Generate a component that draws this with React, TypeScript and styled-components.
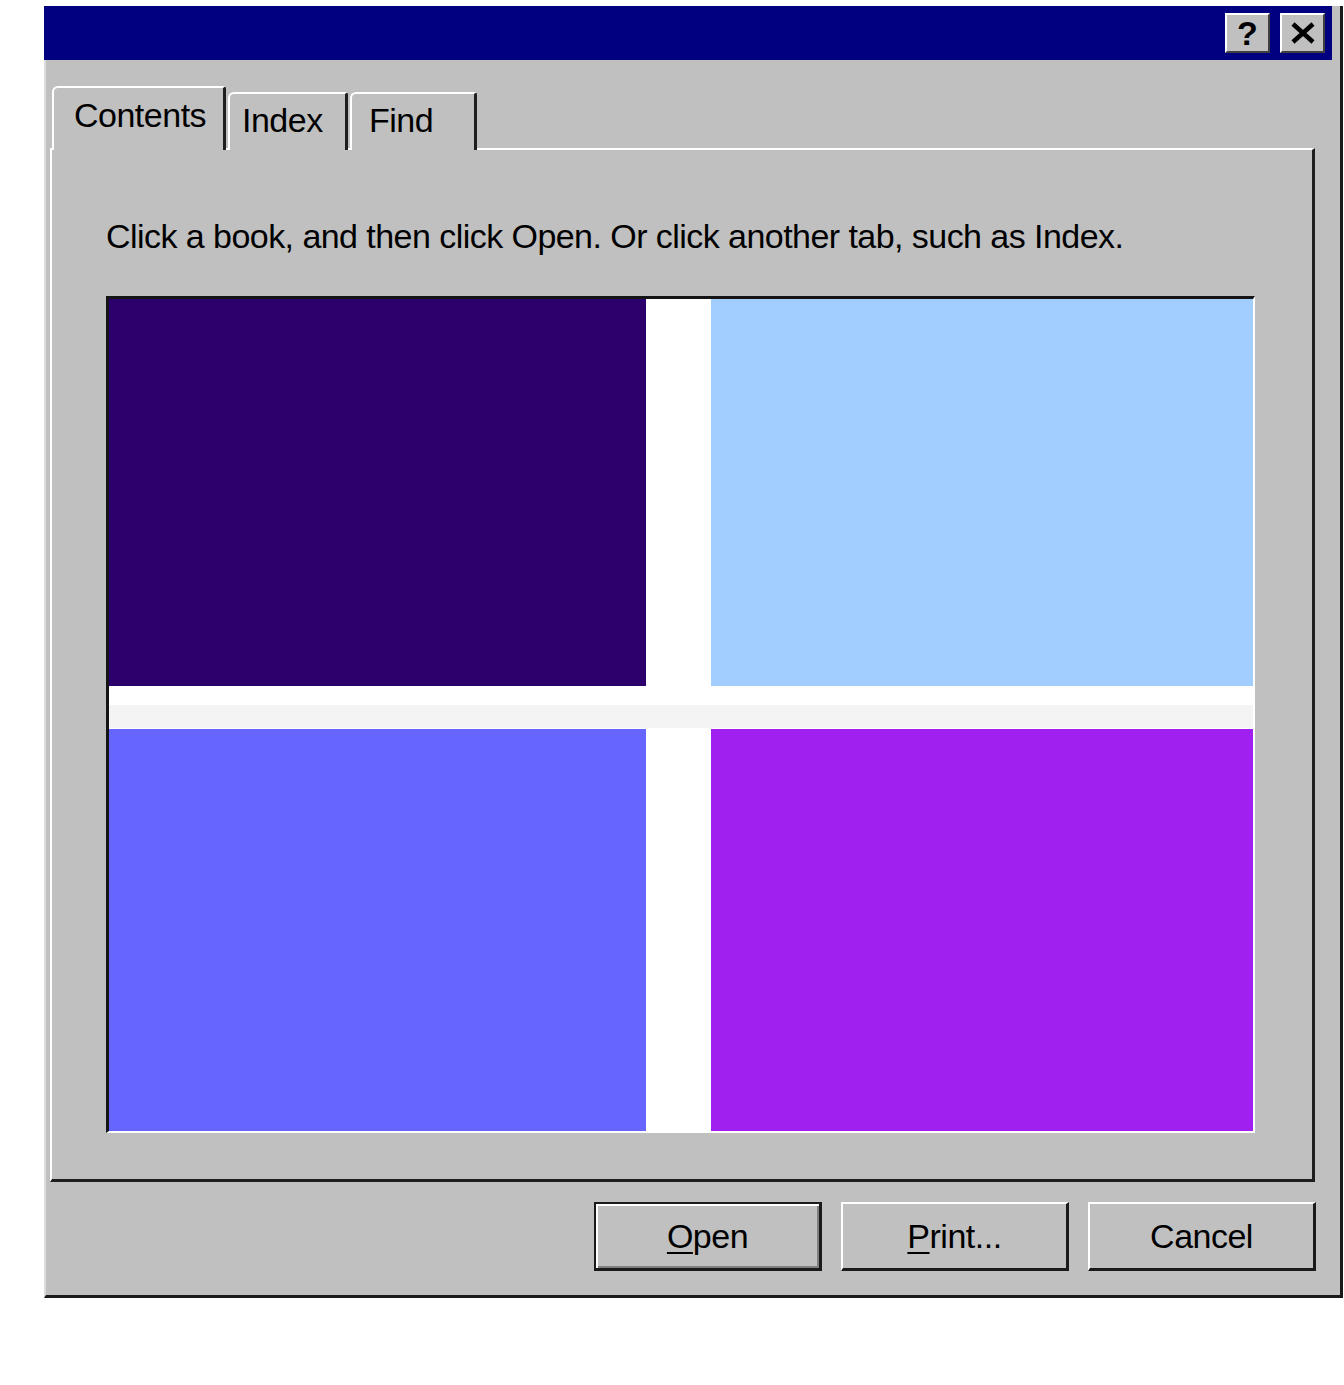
import React from "react";
import styled, { createGlobalStyle } from "styled-components";

const Global = createGlobalStyle`
  html, body { margin: 0; padding: 0; background: #ffffff; }
  body { font-family: "Liberation Sans", Arial, sans-serif; }
`;

const Window = styled.div`
  box-sizing: border-box;
  margin: 6px 0 0 44px;
  width: 1299px;
  height: 1292px;
  background: #c0c0c0;
  border-left: 2px solid #dcdcdc;
  border-right: 3px solid #1a1a1a;
  border-bottom: 3px solid #1a1a1a;
  display: flex;
  flex-direction: column;
`;

const TitleBar = styled.div`
  height: 54px;
  margin-left: -2px;
  margin-right: 8px;
  background: #000080;
  display: flex;
  align-items: center;
  justify-content: flex-end;
  gap: 10px;
  padding-right: 7px;
`;

const CaptionButton = styled.div`
  box-sizing: border-box;
  width: 45px;
  height: 40px;
  background: #c0c0c0;
  border-top: 2px solid #ffffff;
  border-left: 2px solid #ffffff;
  border-right: 2px solid #404040;
  border-bottom: 2px solid #404040;
  display: flex;
  align-items: center;
  justify-content: center;
  font-weight: bold;
  font-size: 34px;
  color: #000;
  line-height: 1;
`;

const Body = styled.div`
  flex: 1;
  display: flex;
  flex-direction: column;
  padding: 26px 25px 24px 4px;
`;

const TabRow = styled.div`
  display: flex;
  align-items: flex-end;
  height: 64px;
  margin-bottom: -2px;
  position: relative;
  z-index: 1;
`;

const Tab = styled.div<{ $active?: boolean; $w: number; $pad: number }>`
  box-sizing: border-box;
  width: ${(p) => p.$w}px;
  height: ${(p) => (p.$active ? 64 : 58)}px;
  margin-left: 2px;
  background: #c0c0c0;
  border-top: 2px solid #ffffff;
  border-left: 2px solid #ffffff;
  border-right: 3px solid #1e1e1e;
  border-top-left-radius: 6px;
  border-top-right-radius: 3px;
  display: flex;
  align-items: flex-start;
  justify-content: flex-start;
  padding-left: ${(p) => p.$pad}px;
  padding-top: ${(p) => (p.$active ? 7 : 6)}px;
  font-size: 34px;
  letter-spacing: -0.5px;
  color: #000;
  line-height: 40px;
`;

const Panel = styled.div`
  box-sizing: border-box;
  height: 1034px;
  background: #c0c0c0;
  border-top: 2px solid #ffffff;
  border-left: 2px solid #ffffff;
  border-right: 3px solid #1e1e1e;
  border-bottom: 3px solid #1e1e1e;
  padding: 66px 0 0 54px;
  display: flex;
  flex-direction: column;
`;

const Instruction = styled.div`
  font-size: 34px;
  letter-spacing: -0.55px;
  line-height: 40px;
  color: #000;
  margin-bottom: 40px;
`;

const Picture = styled.div`
  box-sizing: border-box;
  width: 1149px;
  height: 837px;
  border-top: 3px solid #141414;
  border-left: 3px solid #141414;
  border-right: 2px solid #ffffff;
  border-bottom: 2px solid #ffffff;
  display: grid;
  grid-template-columns: 537px 1fr;
  grid-template-rows: 387px 1fr;
  column-gap: 65px;
  row-gap: 43px;
  background: linear-gradient(
    to bottom,
    #ffffff 0 406px,
    #f4f4f4 406px 429px,
    #ffffff 429px
  );
`;

const Swatch = styled.div<{ $c: string }>`
  background: ${(p) => p.$c};
`;

const ButtonRow = styled.div`
  display: flex;
  justify-content: flex-end;
  gap: 19px;
  margin-top: 20px;
  margin-right: -1px;
`;

const PushButton = styled.div<{ $default?: boolean }>`
  box-sizing: border-box;
  width: 228px;
  height: 69px;
  background: #c0c0c0;
  border-top: 2px solid ${(p) => (p.$default ? "#1a1a1a" : "#ffffff")};
  border-left: 2px solid ${(p) => (p.$default ? "#1a1a1a" : "#ffffff")};
  border-right: 3px solid #1a1a1a;
  border-bottom: 3px solid #1a1a1a;
  box-shadow: ${(p) =>
    p.$default ? "inset 2px 2px 0 #ffffff, inset -2px -2px 0 #808080" : "none"};
  display: flex;
  align-items: center;
  justify-content: center;
  font-size: 34px;
  letter-spacing: -0.5px;
  color: #000;
`;

const Hot = styled.span`
  text-decoration: underline;
  text-underline-offset: 4px;
  text-decoration-thickness: 2px;
`;

export default function App() {
  return (
    <>
      <Global />
      <Window>
        <TitleBar>
          <CaptionButton>?</CaptionButton>
          <CaptionButton>
            <svg width="28" height="24" viewBox="0 0 28 24">
              <path d="M4 3 L24 21 M24 3 L4 21" stroke="#000" strokeWidth="4.5" />
            </svg>
          </CaptionButton>
        </TitleBar>
        <Body>
          <TabRow>
            <Tab $active $w={174} $pad={20}>Contents</Tab>
            <Tab $w={120} $pad={12}>Index</Tab>
            <Tab $w={127} $pad={17}>Find</Tab>
          </TabRow>
          <Panel>
            <Instruction>
              Click a book, and then click Open. Or click another tab, such as Index.
            </Instruction>
            <Picture>
              <Swatch $c="#2c006c" />
              <Swatch $c="#a2cdff" />
              <Swatch $c="#6666ff" />
              <Swatch $c="#a020f0" />
            </Picture>
          </Panel>
          <ButtonRow>
            <PushButton $default>
              <span>
                <Hot>O</Hot>pen
              </span>
            </PushButton>
            <PushButton>
              <span>
                <Hot>P</Hot>rint...
              </span>
            </PushButton>
            <PushButton>Cancel</PushButton>
          </ButtonRow>
        </Body>
      </Window>
    </>
  );
}
